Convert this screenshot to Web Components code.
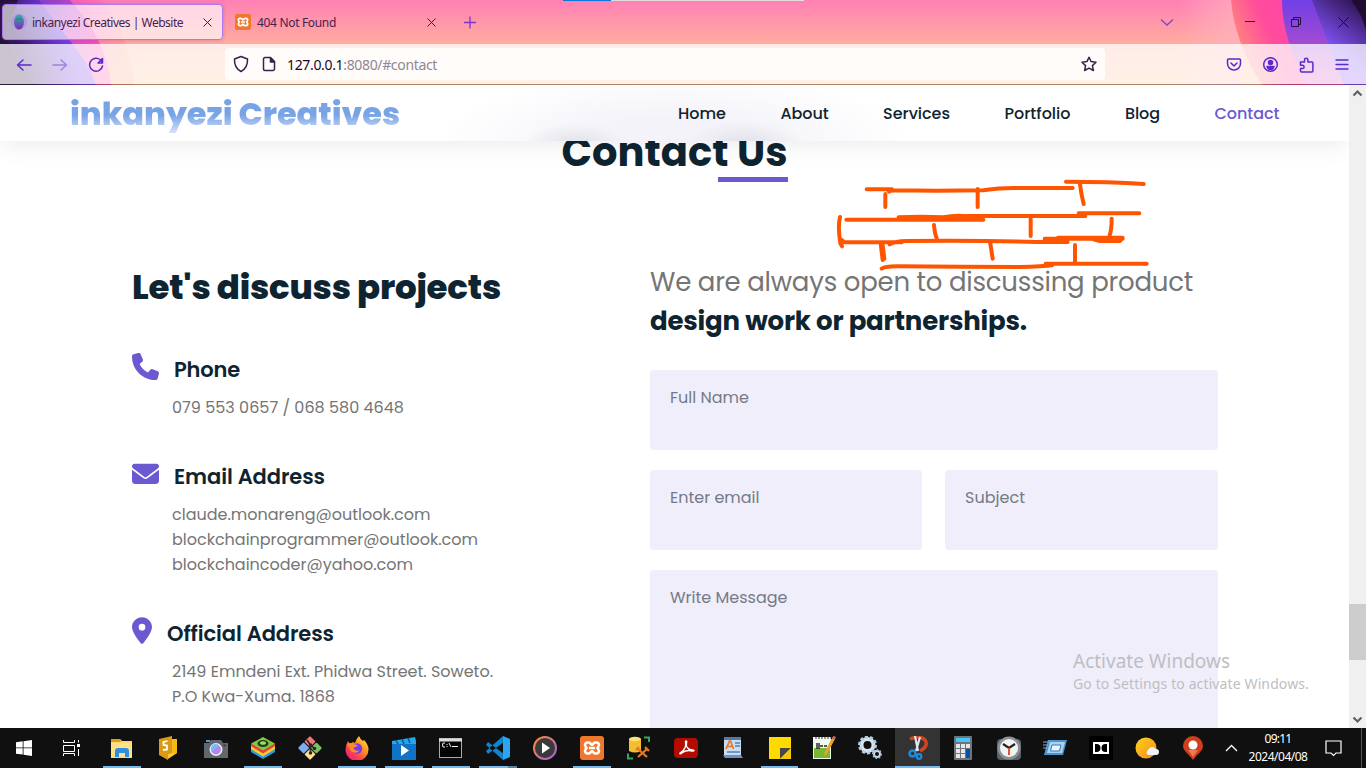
<!DOCTYPE html>
<html lang="en">
<head>
<meta charset="utf-8">
<title>inkanyezi Creatives | Website</title>
<style>
html,body{margin:0;height:100%;overflow:hidden;background:#fff}
body{font-family:Poppins,Inter,sans-serif;color:#0e2431}
</style>
</head>
<body>
<desk-top></desk-top>
<script>
const define=(name,html,setup)=>customElements.define(name,class extends HTMLElement{
  connectedCallback(){
    if(this.shadowRoot)return;
    this.attachShadow({mode:'open'}).innerHTML=typeof html==='function'?html(this):html;
    if(setup)setup(this);
  }
});

define('desk-top',`<style>:host{display:flex;flex-direction:column;width:1366px;height:768px;overflow:hidden;position:relative}
water-mark{position:absolute;left:1073px;top:649px}</style>
<browser-chrome></browser-chrome><site-view></site-view><task-bar></task-bar><water-mark></water-mark>`);

/* ---------- browser window ---------- */
define('browser-chrome',`<style>
:host{display:block;height:85px;flex:none;position:relative;isolation:isolate;font-family:"Segoe UI","Noto Sans","Open Sans",sans-serif;overflow:hidden}
.art{position:absolute;inset:0;z-index:-1}
.load{position:absolute;left:563px;top:0;width:241px;height:1px;background:linear-gradient(90deg,#0a78d7 48px,#e2dcdc 48px)}
</style>
<svg class="art" width="1366" height="85" viewBox="0 0 1366 85">
<defs>
<linearGradient id="sky" x2="0" y2="1"><stop stop-color="#ff80b5"/><stop offset=".52" stop-color="#ffad9f"/><stop offset="1" stop-color="#ffc694"/></linearGradient>
<linearGradient id="lv" gradientUnits="userSpaceOnUse" x1="12" y1="30" x2="80" y2="4"><stop stop-color="#2c1060"/><stop offset=".25" stop-color="#4a2494"/><stop offset=".6" stop-color="#7038e0"/><stop offset="1" stop-color="#8a48ff"/></linearGradient>
<linearGradient id="lm" gradientUnits="userSpaceOnUse" x1="45" y1="0" x2="110" y2="40"><stop stop-color="#8a40c8"/><stop offset=".45" stop-color="#d04ad0"/><stop offset="1" stop-color="#ff55a8"/></linearGradient>
<linearGradient id="lo" gradientUnits="userSpaceOnUse" x1="70" y1="0" x2="135" y2="50"><stop stop-color="#ff5bb0"/><stop offset=".5" stop-color="#ff86b8"/><stop offset="1" stop-color="#ffa880"/></linearGradient>
<linearGradient id="glow"><stop stop-color="#ffb8c8" stop-opacity="0"/><stop offset="1" stop-color="#ffb0bd" stop-opacity=".8"/></linearGradient>
<linearGradient id="ro" gradientUnits="userSpaceOnUse" x1="1235" y1="30" x2="1280" y2="10"><stop stop-color="#ff8080"/><stop offset=".6" stop-color="#ff4d9c"/><stop offset="1" stop-color="#ff48a4"/></linearGradient>
<linearGradient id="rv" x2="0" y2="1"><stop stop-color="#6f3fe6"/><stop offset=".5" stop-color="#a14bd4"/><stop offset="1" stop-color="#e660c0"/></linearGradient>
<linearGradient id="rd" gradientUnits="userSpaceOnUse" x1="1322" y1="44" x2="1352" y2="4"><stop stop-color="#8556ff"/><stop offset="1" stop-color="#351a62"/></linearGradient>
</defs>
<rect width="1366" height="85" fill="url(#sky)"/>
<path d="M0 0H104Q130 38 134 85H0Z" fill="url(#lo)"/>
<path d="M0 0H70Q107 40 111 85H0Z" fill="url(#lm)"/>
<path d="M0 0H39L74 46Q90 66 96 85H0Z" fill="url(#lv)"/>
<path d="M0 0H18L6 32Q10 55 34 85H0Z" fill="#24103c"/>
<rect x="1180" width="60" height="85" fill="url(#glow)"/>
<path d="M1231 0Q1234 40 1262 85H1366V0Z" fill="url(#ro)"/>
<path d="M1282 0Q1282 38 1307 85H1366V0Z" fill="url(#rv)"/>
<path d="M1312 0Q1326 38 1344 85H1366V0Z" fill="url(#rd)"/>
<path d="M1351 0Q1362 14 1366 30V0Z" fill="#1e0c32"/>
<rect y="44" width="1366" height="40" fill="#fff" fill-opacity=".76"/>
<rect y="84" width="1366" height="1" fill="#3a1e30" fill-opacity=".4"/>
</svg>
<div class="load"></div>
<tab-strip></tab-strip><tool-bar></tool-bar>`);

define('tab-strip',`<style>
:host{display:flex;height:44px;box-sizing:border-box;padding:4px 0 0 2px;color:#45234f;font-size:12px}
.tab{display:flex;align-items:center;box-sizing:border-box;width:221px;height:36px;padding-left:8px;border:1px solid transparent;border-radius:4px}
.on{background:#ffffffa8;border-color:#b078f0;box-shadow:0 0 4px #8a409860}
.tab svg:first-child{margin-right:5px;flex:none}
fit-text{line-height:18px;padding-top:2px}
.x{margin-left:auto;margin-right:9px}
.plus{margin:11px 0 0 16px}
.win{display:flex;margin-left:auto;align-items:center;height:36px}
</style>
<div class="tab on"><svg width="16" height="16"><defs><linearGradient id="e" x2="0" y2="1"><stop stop-color="#2db5a4"/><stop offset="1" stop-color="#7b2bb8"/></linearGradient></defs><circle cx="8" cy="8" r="8" fill="#b79be0"/><ellipse cx="8" cy="8" rx="5" ry="7.500" fill="url(#e)"/><path d="M5 6q3-3 6 0" stroke="#217e93" fill="none"/></svg><fit-text w="151">inkanyezi Creatives | Website</fit-text>
<svg class="x" width="11" height="11" stroke="#3d1c4a"><path d="M1.500 1.500l8 8M9.500 1.500l-8 8"/></svg></div>
<div class="tab" style="margin-left:3px"><x-ampp size="16"></x-ampp><fit-text w="79" style="margin-left:6px">404 Not Found</fit-text>
<svg class="x" width="11" height="11" stroke="#3d1c4a"><path d="M1.500 1.500l8 8M9.500 1.500l-8 8"/></svg></div>
<svg class="plus" width="14" height="14" stroke="#7a35d0" stroke-width="1.300"><path d="M7 1.500v12M1 7.500h12"/></svg>
<div class="win">
<svg width="14" height="9" fill="none" stroke="#8a3fc0" stroke-width="1.300" style="margin-right:71px"><path d="M1 1.500l6 5.500 6-5.500"/></svg>
<svg width="11" height="11" stroke="#351025" style="margin-right:35px"><path d="M0 4.500h10"/></svg>
<svg width="11" height="11" fill="none" stroke="#251040" style="margin-right:36px"><path d="M.5 2.500h7v7h-7zM2.500 2.500v-2h7v7h-2"/></svg>
<svg width="11" height="11" stroke="#1b0c2c" style="margin-right:17px"><path d="M.5.5l10 10M10.500.5l-10 10"/></svg>
</div>`);

define('tool-bar',`<style>
:host{display:flex;height:40px;align-items:center;box-sizing:border-box;padding:1px 17px 0 16px}
.nav{display:flex;gap:20px;width:209px}
.url{display:flex;align-items:center;box-sizing:border-box;width:880px;height:32px;border-radius:4px;background:#fffcfa;padding:0 8px;font-size:14px;color:#15092a;margin-top:-1px}
.url svg{flex:none}
.url i{font-style:normal;color:#8f8796}
.star{margin-left:auto}
.tools{display:flex;margin-left:auto;gap:20px}
svg{fill:none;stroke:#5a2acb;stroke-width:1.500;stroke-linecap:round;stroke-linejoin:round}
.url svg{stroke:#32244a}
</style>
<div class="nav"><svg width="16" height="16"><path d="M15 8H1.500M7 3L1.500 8 7 13"/></svg><svg width="16" height="16" opacity=".45"><path d="M1 8h13.500M9 3l5.500 5L9 13"/></svg><svg width="16" height="16"><path d="M14 5A6.500 6.500 0 1 0 14.500 9M14.500 1.500v4.500h-4.500z"/></svg></div>
<div class="url"><svg width="16" height="18"><path d="M8 1.500l6.500 2.500c.3 5-1 9.500-6.500 12.500C2.500 13.500 1.200 9 1.500 4z"/></svg>
<svg width="14" height="16" style="margin:0 11px 0 13px"><path d="M3 1.500h5.500l4 4V13a1.500 1.500 0 0 1-1.500 1.500H3A1.500 1.500 0 0 1 1.500 13V3A1.500 1.500 0 0 1 3 1.500z"/><path d="M8.500 2v4h4z" fill="#32244a"/></svg>
<fit-text w="150" style="padding-top:1px">127.0.0.1<i>:8080/#contact</i></fit-text>
<svg class="star" width="16" height="16"><path d="M8 1.200l2.100 4.400 4.900.6-3.600 3.400 1 4.900L8 12.100l-4.400 2.400 1-4.900L1 6.200l4.900-.6z"/></svg></div>
<div class="tools">
<svg width="16" height="16" style="margin-left:-1px;margin-right:1px"><path d="M2.500 2h11a1 1 0 0 1 1 1v3.500a6.500 6.500 0 0 1-13 0V3a1 1 0 0 1 1-1zM5 6l3 3 3-3"/></svg>
<svg width="16" height="16"><circle cx="7.500" cy="7.500" r="6.800"/><circle cx="7.500" cy="5.500" r="2" fill="#5a2acb"/><path d="M4 9.500h7q-1 3-3.500 3T4 9.500z" fill="#5a2acb"/></svg>
<svg width="16" height="16"><path d="M1.500 5h4V3a1.700 1.700 0 0 1 3.400 0v2h4a1 1 0 0 1 1 1v8a1 1 0 0 1-1 1H2.500a1 1 0 0 1-1-1v-2.500h2a1.600 1.600 0 0 0 0-3.200h-2z"/></svg>
<svg width="14" height="16" stroke-linecap="butt" style="stroke-width:1.300"><path d="M1 3h12M1 7.500h12M1 12h12"/></svg>
</div>`);

/* ---------- web page ---------- */
define('site-view',`<style>
:host{display:grid;grid-template-columns:1349px 17px;height:643px;flex:none}
.page{overflow:hidden;position:relative}
brick-sketch{position:absolute;left:820px;top:85px}
.bar{background:#f0f0f0;display:flex;flex-direction:column;align-items:center}
.bar b{width:17px;height:56px;background:#cdcdcd;margin-top:auto}
.bar svg{fill:none;stroke:#606060;stroke-width:2.200}
</style>
<div class="page"><site-header></site-header><contact-section></contact-section><brick-sketch></brick-sketch></div>
<div class="bar"><svg width="11" height="17"><path d="M1.500 10.500l4-4 4 4"/></svg><b></b><svg width="11" height="17" style="margin-top:51px"><path d="M1.500 6.500l4 4 4-4"/></svg></div>`);

define('site-header',`<style>
:host{display:flex;position:relative;z-index:1;height:56px;box-sizing:border-box;padding:2px 69.500px 0 70px;align-items:center;justify-content:space-between;
background:radial-gradient(ellipse 50px 22px at 575px 60px,#e0e2e8,transparent),radial-gradient(ellipse 60px 24px at 745px 60px,#e0e2e8,transparent),radial-gradient(ellipse 240px 75px at 675px 60px,#f4f3f9 35%,transparent),#fff;
box-shadow:0 4px 24px #00000014}
.logo{font-size:32px;font-weight:800;line-height:48px;background:linear-gradient(#78a3e5 52%,#b7cdf3 77%,#f2f6fe);-webkit-background-clip:text;background-clip:text;-webkit-text-fill-color:transparent}
nav{display:flex;gap:54.500px;font-size:16px;font-weight:500;line-height:24px}
.on{color:#6a59d1}
</style>
<fit-text class="logo" w="330">inkanyezi Creatives</fit-text>
<nav><fit-text w="48">Home</fit-text><fit-text w="48">About</fit-text><fit-text w="67">Services</fit-text><fit-text w="66">Portfolio</fit-text><fit-text w="35">Blog</fit-text><fit-text class="on" w="65">Contact</fit-text></nav>`);

define('contact-section',`<style>
:host{display:block}
h2,h3,p{margin:0}
.title{width:226px;margin:-19px auto 0}
h2{font-size:40px;font-weight:700;line-height:60px;height:55px}
.title::after{content:"";display:block;width:70px;height:5px;margin-left:auto;background:#6a59d1}
.cols{display:grid;grid-template-columns:518px 568px;padding-left:132px;margin-top:79px}
h3{font-size:34px;font-weight:800;line-height:52px;height:52px;margin-bottom:40px}
.info{display:flex;flex-direction:column;gap:40px}
.lead{font-size:26px;line-height:39px;color:#757575;padding-top:2px;margin-bottom:29px}
.lead b{color:#0e2431;font-weight:700;display:block}
.lead fit-text{display:block}
.form{display:grid;grid-template-columns:272px 273px;gap:20px 23px}
.wide{grid-column:span 2}
</style>
<div class="title"><h2><fit-text w="226">Contact Us</fit-text></h2></div>
<div class="cols">
<div><h3><fit-text w="369">Let's discuss projects</fit-text></h3>
<div class="info">
<info-item><svg slot="icon" width="27" height="27" viewBox="0 0 512 512"><path fill="#6a59d1" d="M164.900 24.600c-7.700-18.600-28-28.500-47.400-23.200l-88 24C12.100 30.200 0 46 0 64c0 247.400 200.600 448 448 448 18 0 33.800-12.100 38.600-29.500l24-88c5.300-19.400-4.600-39.700-23.200-47.400l-96-40c-16.300-6.800-35.200-2.100-46.300 11.600L304.700 368C234.300 334.700 177.300 277.700 144 207.300L193.300 167c13.700-11.200 18.400-30 11.600-46.300l-40-96z"/></svg><fit-text slot="name" w="66">Phone</fit-text>
<fit-text w="232">079 553 0657 / 068 580 4648</fit-text></info-item>
<info-item><svg slot="icon" width="27" height="27" viewBox="0 -8 512 512"><path fill="#6a59d1" d="M48 64C21.500 64 0 85.500 0 112c0 15.100 7.100 29.300 19.200 38.400l217.600 163.200c11.400 8.500 27 8.500 38.400 0l217.600-163.200c12.100-9.100 19.200-23.300 19.200-38.400 0-26.500-21.500-48-48-48zM0 176v208c0 35.300 28.700 64 64 64h384c35.300 0 64-28.700 64-64V176L294.400 339.200c-22.800 17.100-54 17.100-76.800 0z"/></svg><fit-text slot="name" w="151">Email Address</fit-text>
<fit-text w="258.500">claude.monareng@outlook.com</fit-text><fit-text w="306">blockchainprogrammer@outlook.com</fit-text><fit-text w="241">blockchaincoder@yahoo.com</fit-text></info-item>
<info-item><svg slot="icon" width="20" height="27" viewBox="0 0 384 512"><path fill="#6a59d1" d="M215.700 499.200C267 435 384 279.400 384 192 384 86 298 0 192 0S0 86 0 192c0 87.400 117 243 168.300 307.200 12.300 15.300 35.100 15.300 47.400 0zM192 128a64 64 0 1 1 0 128 64 64 0 1 1 0-128z"/></svg><fit-text slot="name" w="167">Official Address</fit-text>
<fit-text w="321">2149 Emndeni Ext. Phidwa Street. Soweto.</fit-text><fit-text w="163">P.O Kwa-Xuma. 1868</fit-text></info-item>
</div></div>
<div><div class="lead"><fit-text w="543">We are always open to discussing product</fit-text><b><fit-text w="377">design work or partnerships.</fit-text></b></div>
<div class="form"><form-field class="wide"><fit-text w="79">Full Name</fit-text></form-field><form-field><fit-text w="89.500">Enter email</fit-text></form-field><form-field><fit-text w="60">Subject</fit-text></form-field><form-field class="wide" style="height:180px"><fit-text w="117.500">Write Message</fit-text></form-field></div></div>
</div>`);

define('info-item',`<style>
:host{display:block}
.head{display:flex;gap:15px;height:32px;font-size:21px;font-weight:600;line-height:34px}
.body{display:flex;flex-direction:column;padding:10px 0 0 40px;font-size:16px;line-height:25px;color:#757575}
</style><div class="head"><slot name="icon"></slot><slot name="name"></slot></div><div class="body"><slot></slot></div>`);

define('form-field',`<style>
:host{display:block;box-sizing:border-box;height:80px;padding:16px 20px;border-radius:4px;background:#f0eefb;font-size:16px;line-height:24px;color:#757a88}
</style><slot></slot>`);

define('brick-sketch',`<style>:host{display:block;z-index:2;width:340px;height:110px}svg{display:block;fill:none;stroke:#ff5500;stroke-width:12;stroke-linecap:round;stroke-linejoin:round}</style>
<svg width="340" height="110" viewBox="0 0 1020 330">
<path d="M140 58H216M207 65L215 61Q350 63 490 61Q540 54 580 54H758M738 35Q870 35 971 42"/>
<path d="M196 72V111M473 57V111M780 43Q783 70 791 102"/>
<path d="M79 149H490M236 142Q300 138 370 142Q400 136 430 138H796M236 145H480M776 130H958"/>
<path d="M60 141Q53 170 61 220L66 229M342 165Q344 190 350 205M632 146V198M875 146Q875 178 869 196"/>
<path d="M66 210L72 217H245M209 223Q225 213 260 213Q500 211 650 216H743M674 206H908M714 203H908L900 213H840L820 208"/>
<path d="M182 220L188 270M188 226L193 266M511 221L518 266M765 225V277"/>
<path d="M185 296Q195 289 230 289Q430 291 600 291Q670 290 696 286M677 281H980"/>
</svg>`);

define('water-mark',`<style>:host{display:block;font-family:"Segoe UI","Noto Sans",sans-serif;font-weight:400;color:#bebec2}fit-text{display:block}
.a{font-size:19px;line-height:25px}.b{font-size:14px;line-height:20px}</style>
<fit-text class="a" w="157">Activate Windows</fit-text><fit-text class="b" w="236">Go to Settings to activate Windows.</fit-text>`);

/* ---------- taskbar ---------- */
const xamppArt='<rect width="24" height="24" rx="3" fill="#f0772e"/><path d="M8.500 6.500h-1a2.500 2.500 0 0 0-2 4l1 1.500-1 1.500a2.500 2.500 0 0 0 2 4h1.500q1.500 0 2-1.800 1-.8 2 0 .5 1.800 2 1.800h1.500a2.500 2.500 0 0 0 2-4L17.500 12l1-1.500a2.500 2.500 0 0 0-2-4H15q-1.500 0-2 1.800-1 .8-2 0-.5-1.800-2.500-1.800zM9 12h6" fill="none" stroke="#fff" stroke-width="2.600"/>';
define('x-ampp',h=>`<style>:host{display:block;line-height:0}</style><svg width="${h.getAttribute('size')}" height="${h.getAttribute('size')}" viewBox="0 0 24 24">${xamppArt}</svg>`);

const apps=[
['on','<path d="M1 3h9l2 2h10v17H1z" fill="#ffd76b"/><path d="M1 3h9l1 3H1z" fill="#e09a1c"/><path d="M1 7h21v14H1z" fill="#ffe08a"/><path d="M5 21v-6a3 3 0 0 1 3-3h8a3 3 0 0 1 3 3v6h-4v-4H9v4z" fill="#2f8fdf"/>'],
['','<path d="M9 3h11v14l-8 1z" fill="#f5ba12"/><path d="M2 3L15 0v17l-4 1v6l-9-5z" fill="#d99a18"/><path d="M11 18l4-1 5 0-9 6z" fill="#ffc928"/><path d="M10.500 5l-4 1v3l3.500.5v4l-4 .5" fill="none" stroke="#fff" stroke-width="1.800"/>'],
['','<path d="M0 7h5l2-3h10l2 3h5v15H0z" fill="#60676e"/><rect x="2" y="4" width="4" height="2" fill="#31a7ea"/><rect x="19.500" y="8.500" width="2" height="2" fill="#31363b"/><circle cx="12" cy="13.500" r="6.500" fill="#eceef3"/><circle cx="12" cy="13.500" r="4.900" fill="#b884ea"/><path d="M8 15.500a4.500 4.500 0 0 1 7-6z" fill="#77b9fa"/>'],
['on','<path d="M0 16l12 7 12-7v-3H0z" fill="#2c9ae8"/><path d="M0 13l12 7.500 12-7.500v-3H0z" fill="#f6cf26"/><path d="M0 10l12 7.500 12-7.500V8H0z" fill="#e93c38"/><path d="M0 7.500L12 1l12 6.500-12 7z" fill="#80c83e"/><ellipse cx="12" cy="7.500" rx="5.500" ry="3.600" fill="#1f3d22"/><ellipse cx="12" cy="7" rx="3" ry="1.800" fill="#9fe05a"/>'],
['','<g transform="rotate(45 12 12)"><rect x="3.500" y="3.500" width="8" height="8" rx="1" fill="#f27878"/><rect x="3.500" y="12.500" width="8" height="8" rx="1" fill="#7aaef5"/><rect x="12.500" y="3.500" width="8" height="8" rx="1" fill="#7cc064"/><rect x="12.500" y="12.500" width="8" height="8" rx="1" fill="#ffe28a"/></g><path d="M9 4l3.500 5v8M12.500 9l4 3.500" stroke="#282828" stroke-width="1.600" fill="none"/><circle cx="12.500" cy="9" r="1.800" fill="#282828"/><circle cx="12.500" cy="17" r="1.800" fill="#282828"/><circle cx="16.500" cy="12.500" r="1.800" fill="#282828"/>'],
['on','<defs><linearGradient id="ff" x1="1" x2=".2" y2="1"><stop stop-color="#fff04a"/><stop offset=".4" stop-color="#ff9c20"/><stop offset=".75" stop-color="#ff3d4e"/><stop offset="1" stop-color="#e0218a"/></linearGradient></defs><path d="M3 5l2 3 3-2 2 1q1-4 4-7 1 3 4 5l1-1q4 4 4.500 9a11.500 11.500 0 0 1-23 1Q.5 9 3 5z" fill="url(#ff)"/><circle cx="12" cy="12.500" r="5.200" fill="#7a3ae8"/><path d="M2 8q4-2 7 0l4 1.500q-2 2-4.500 2 1 4 6 3-3 4-8 1-3-3-4.500-7.500z" fill="#ff8b26"/>'],
['on','<rect y="6" width="24" height="18" fill="#1173c8"/><path d="M0 5l23-4 1 4v3H0z" fill="#25a8e8"/><path d="M4 4l2 4M10 3l2 5M16 2l2 5" stroke="#0c568e" stroke-width="1.500"/><path d="M9 9v11l8-5.500z" fill="#fff"/>'],
['on','<rect x=".5" y="2.500" width="22" height="19" fill="#050505" stroke="#aaa"/><path d="M0 4h23" stroke="#ddd" stroke-width="3"/><path d="M6 7H4q-1 2 0 4h2M8 8v1M8 10v1M10 7l2 4M13 10.500h6" stroke="#eee" fill="none"/>'],
['on split','<path d="M17 0L0 15l2 3L18 6zM17 24L0 9l2-3 16 12z" fill="#1282cf"/><path d="M17 0l7 3v18l-7 3z" fill="#2ba5f0"/>'],
['','<defs><linearGradient id="mp" x2="1" y2="1"><stop stop-color="#ff8a30"/><stop offset="1" stop-color="#a060e0"/></linearGradient></defs><circle cx="12" cy="12" r="11" fill="#3a3a3d" stroke="url(#mp)" stroke-width="2"/><path d="M9 6.500v11l8-5.500z" fill="#fff"/>'],
['on',xamppArt],
['','<path d="M2 3v12q6 3 12 0V3z" fill="#f2bf30"/><ellipse cx="8" cy="3" rx="6" ry="2.200" fill="#ffe07a"/><path d="M17 1.500h5V6M1 17.500v5h5" stroke="#35a55a" stroke-width="2" fill="none"/><path d="M11 13l9 8M20 13l-9 8M9 14l3-3M18 11l4 4" stroke="#e87722" stroke-width="2.300"/>'],
['','<rect width="24" height="20" y="2" rx="4" fill="#b30b00"/><path d="M6 17c6-4 6-7 5.500-11 0-2 2-1 1 1-1 4 2 7 6 7 2 0 2 1.500-.5 1-4-1-8 0-11 2.500-1 .5-1.500 0-1-.5z" fill="none" stroke="#fff" stroke-width="1.400"/>'],
['','<path d="M3 1h17v20H3z" fill="#c7ddf0"/><path d="M3 1h17v3H3z" fill="#55799f"/><path d="M5 13L8.500 5h1l3 8M6 10.500h6" fill="none" stroke="#e47725" stroke-width="1.700"/><path d="M14 7h5M14 10h5M6 16h13" stroke="#557fb8" stroke-width="1.500"/><path d="M2 19h18l2 3H4z" fill="#6c93c4"/>'],
['on sticky','<path d="M1 1h22v22H1z" fill="#ffda00"/><path d="M12 23V12h11z" fill="#474747"/><path d="M12 23L23 12v11z" fill="#f2c811"/>'],
['w46','<path d="M1 1h18v22H1z" fill="#f4f8ee"/><path d="M2 12h16v10H2z" fill="#76b82f"/><path d="M3 2h16" stroke="#999" stroke-dasharray="2 1" stroke-width="2"/><path d="M5 7v6M8 10h3M12 10h3M7 7v6" stroke="#222" stroke-width="1.400"/><path d="M20 2l3 1-8 15-3 2 .5-3.500z" fill="#e6a52a"/><path d="M20 2l1.500-2L24 1l-1 2z" fill="#e86a62"/>'],
['w46','<circle cx="9.500" cy="9" r="6" fill="none" stroke="#d5e3ef" stroke-width="4"/><circle cx="9.500" cy="9" r="8" fill="none" stroke="#b4cade" stroke-width="3" stroke-dasharray="3 2"/><circle cx="19" cy="18" r="3" fill="none" stroke="#c9dced" stroke-width="2"/><circle cx="19" cy="18" r="4" fill="none" stroke="#a3c0d8" stroke-width="2" stroke-dasharray="1.500 1.500"/>'],
['on active','<path d="M4 3q10-4 15 1 4 6-5 11" fill="none" stroke="#d34322" stroke-width="3.500"/><path d="M9 0l3 15M14 1l-4 14" stroke="#dfe5ec" stroke-width="2.200"/><circle cx="6.500" cy="17.500" r="3" fill="none" stroke="#208ad8" stroke-width="2.500"/><circle cx="13" cy="20.500" r="2.300" fill="none" stroke="#208ad8" stroke-width="2.300"/>'],
['w46','<rect x="3" width="18" height="24" rx="1" fill="#6d747b"/><rect x="5" y="2" width="14" height="4" fill="#45c8f5"/><path d="M5 8h4v4H5zM10 8h4v4h-4zM15 8h4v4h-4zM5 13h4v4H5zM10 13h4v4h-4zM5 18h4v4H5zM10 18h4v4h-4z" fill="#e4e6e8"/><path d="M15 13h4v9h-4z" fill="#0c4fa0"/>'],
['w46','<rect y="3" width="24" height="21" rx="4" fill="#59636c"/><circle cx="12" cy="12" r="11.500" fill="#8a9299"/><circle cx="12" cy="12" r="9" fill="#f3f3f3"/><path d="M6 8l6 4 6-4" stroke="#222" stroke-width="2.200" fill="none"/><path d="M12 12v7" stroke="#e0542a" stroke-width="2"/>'],
['w46','<path d="M5 4h19l-4 15H1z" fill="#4d94cf"/><path d="M7 6h15l-3 11H4z" fill="#a9d2ef"/><path d="M9 9h9l-1.500 6h-9z" fill="#e9f4fc" stroke="#337bb8"/><path d="M0 6h6M0 9h5M0 12h4" stroke="#78b1dc"/>'],
['w46','<path d="M0 0h24v24H0z" fill="#000"/><path d="M4 6h16v12H4z" fill="#fff"/><path d="M6 8h1.500a4 4 0 0 1 0 8H6zM18 8h-1.500a4 4 0 0 0 0 8H18z" fill="#000"/>'],
['w46','<defs><linearGradient id="su" x2="1" y2="1"><stop stop-color="#ffd21e"/><stop offset="1" stop-color="#f58a1b"/></linearGradient></defs><circle cx="11" cy="12" r="10.500" fill="url(#su)"/><path d="M13 19a3 3 0 0 1 0-5 4.500 4.500 0 0 1 8-1 3 3 0 0 1 0 6z" fill="#f0f1f4"/>'],
['w46','<path d="M12 0a10 10 0 0 1 10 10c0 5-6 8-10 14C8 18 2 15 2 10A10 10 0 0 1 12 0z" fill="#cf3f1c"/><circle cx="12" cy="9" r="4.500" fill="#fff"/><path d="M7 14h10l-5 7z" fill="#ed7a55"/>']
];
define('task-bar',`<style>
:host{display:flex;height:40px;flex:none;background:#101010;font-family:"Segoe UI","Noto Sans",sans-serif;color:#fff;align-items:stretch}
.sys{display:flex;align-items:center;justify-content:center}
.clock{display:flex;flex-direction:column;align-items:center;font-size:12px;line-height:18px;padding-top:2px;width:60px;margin-left:2px}
.end{margin-left:auto;width:1px;background:#555;margin-right:4px}
</style>
<div class="sys" style="width:48px"><svg width="16" height="16" fill="#fff"><path d="M0 2.300L6.700 1.300V7.500H0zM7.500 1.200L16 0v7.500H7.500zM0 8.300h6.700v6.300L0 13.700zM7.500 8.300H16V16l-8.500-1.200z"/></svg></div>
<div class="sys" style="width:47px"><svg width="17" height="16" fill="none" stroke="#fff"><path d="M.5 0v2.500h11V0M.5 5.500h11v6H.5zM.5 16v-2.500h11V16M15.500 0v2.500M15.500 9v7"/><rect x="14.500" y="4.500" width="2" height="2" fill="#fff"/></svg></div>
<div style="width:3px"></div>${apps.map(([c,a])=>`<app-icon class="${c}"><svg width="24" height="24" viewBox="0 0 24 24">${a}</svg></app-icon>`).join('')}
<div class="sys" style="width:30px"><svg width="13" height="8" fill="none" stroke="#fff" stroke-width="1.300"><path d="M1 7l5.500-5.500L12 7"/></svg></div>
<div class="clock"><fit-text w="27">09:11</fit-text><fit-text w="59">2024/04/08</fit-text></div>
<div class="sys" style="width:32px;margin-left:9px"><svg width="17" height="17" fill="none" stroke="#fff" stroke-width="1.200"><path d="M1 1h15v12h-5l-2.500 2.500L6 13H1z"/></svg></div>
<div class="end"></div>`);

define('app-icon',`<style>
:host{display:flex;width:47px;flex:none;box-sizing:border-box;align-items:center;justify-content:center;border:solid transparent;border-width:0 4px 0 5px;background-clip:border-box}
:host(.w46){width:46px;border-width:0}
:host(.sticky){width:45px;border-width:0 3px 0 5px}
:host(.on){background:linear-gradient(#76b9ed,#76b9ed) bottom/100% 2px no-repeat padding-box}
:host(.split){background:linear-gradient(90deg,#76b9ed 29px,#5484a8 29px) bottom/100% 2px no-repeat padding-box}
:host(.active){width:45px;margin-left:2px;border-width:0;background:linear-gradient(#333 38px,#76b9ed 38px)}
</style><slot></slot>`);

/* Single-line label whose tracking is adjusted to fill its w attribute. */
define('fit-text',`<style>:host{display:inline-block;white-space:nowrap;font-kerning:normal}span{display:inline-block}</style><span><slot></slot></span>`,host=>{
  const target=+host.getAttribute('w'),natural=host.shadowRoot.querySelector('span').getBoundingClientRect().width;
  host.style.width=target+'px';
  host.style.letterSpacing=(target-natural)/host.textContent.trim().length+'px';
});
</script>
</body>
</html>
